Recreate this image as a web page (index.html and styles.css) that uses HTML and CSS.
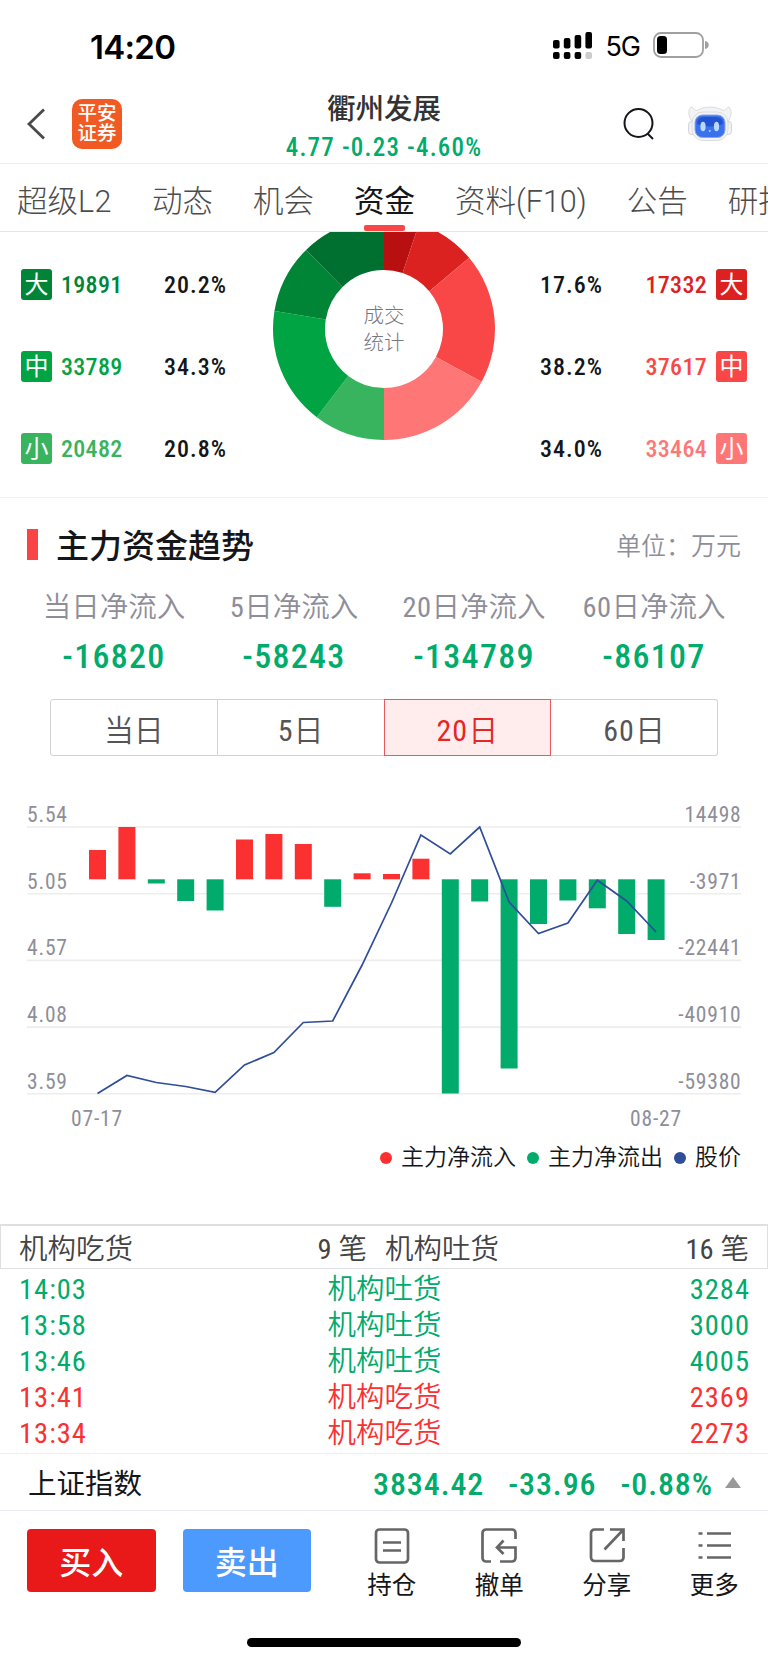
FILE: index.html
```
<!DOCTYPE html>
<html lang="zh-CN">
<head>
    <meta charset="UTF-8">
    <meta name="viewport" content="width=device-width, initial-scale=1.0">
    <title>衢州发展 - 资金</title>
    <link rel="stylesheet" href="styles.css">
</head>
<body>
    <div class="status-bar">
        <span class="clock">14:20</span>
        <div class="status-icons">
            <svg class="signal" width="40" height="28" viewBox="0 0 40 28">
                <rect x="0" y="8" width="6.6" height="8.5" rx="2"/>
                <rect x="10.8" y="6" width="6.6" height="10.5" rx="2"/>
                <rect x="21.6" y="3" width="6.6" height="13.5" rx="2"/>
                <rect x="32.4" y="0" width="6.6" height="16.5" rx="2"/>
                <rect x="0" y="20" width="6.6" height="7" rx="2"/>
                <rect x="10.8" y="20" width="6.6" height="7" rx="2"/>
                <rect x="21.6" y="20" width="6.6" height="7" rx="2"/>
                <rect x="32.4" y="20" width="6.6" height="7" rx="2" fill="#ccc"/>
            </svg>
            <span class="network">5G</span>
            <svg class="battery" width="57" height="26" viewBox="0 0 57 26">
                <rect x="1" y="1" width="49" height="24" rx="7" fill="none" stroke="#a0a0a0" stroke-width="1.8"/>
                <rect x="4" y="4" width="10" height="18" rx="3.5"/>
                <path d="M52 9c5 1 5 7 0 8z" fill="#a0a0a0"/>
            </svg>
        </div>
    </div>

    <header class="header">
        <div class="header-left">
            <svg width="18" height="32" viewBox="0 0 18 32" fill="none" stroke="#4a4a4a" stroke-width="2.8">
                <path d="M17 1.5L2 16l15 14.5"/>
            </svg>
            <div class="logo"><span>平安</span><span>证券</span></div>
        </div>
        <div class="header-title">
            <h1>衢州发展</h1>
            <p class="num">4.77 -0.23 -4.60%</p>
        </div>
        <div class="header-right">
            <svg width="32" height="34" viewBox="0 0 32 34" fill="none" stroke="#15161a" stroke-width="2">
                <circle cx="15.5" cy="16" r="14"/>
                <path d="M24.5 26.5l5.5 5.5"/>
            </svg>
            <svg width="44" height="36" viewBox="0 0 44 36">
                <path d="M4 16C0 9 0 4 3 1c3 0 3 5 7 3 7-4 17-4 24 0 4 2 4-3 7-3 3 3 3 8-1 15z" fill="#f2f3f5" stroke="#d3d5d9" stroke-width=".8"/>
                <rect x=".6" y="15.5" width="7" height="13" rx="3" fill="#f4f4f6" stroke="#c4c6cb" stroke-width=".8"/>
                <rect x="36.4" y="15.5" width="7" height="13" rx="3" fill="#f4f4f6" stroke="#c4c6cb" stroke-width=".8"/>
                <rect x="4" y="6" width="36" height="28.5" rx="11" fill="#f3f4f6" stroke="#d3d5d9" stroke-width=".8"/>
                <rect x="7" y="9" width="30" height="22.5" rx="7.5" fill="#3a72ee" stroke="#8da7e2"/>
                <path d="M9 18q0-7 7-7h12q7 0 7 7-13 5-26 0z" fill="#2453d2"/>
                <ellipse cx="15" cy="20.5" rx="2.6" ry="4.7" fill="#b9d8ff"/>
                <ellipse cx="28.5" cy="20.5" rx="2.6" ry="4.7" fill="#b9d8ff"/>
                <path d="M20.5 24.5h2.6l-1.3 1.5z" fill="#fff"/>
            </svg>
        </div>
    </header>

    <nav class="tabs">
        <a>超级<span class="l2">L2</span></a>
        <a>动态</a>
        <a>机会</a>
        <a class="active">资金</a>
        <a>资料(F10)</a>
        <a>公告</a>
        <a>研报</a>
    </nav>

    <section class="deal">
        <div class="deal-side">
            <div class="deal-row g1"><i>大</i><b class="num">19891</b><span class="num">20.2%</span></div>
            <div class="deal-row g2"><i>中</i><b class="num">33789</b><span class="num">34.3%</span></div>
            <div class="deal-row g3"><i>小</i><b class="num">20482</b><span class="num">20.8%</span></div>
        </div>
        <div class="donut">
            <svg id="donut" width="224" height="210" viewBox="-112 -97 224 210"></svg>
            <div class="donut-label">成交<br>统计</div>
        </div>
        <div class="deal-side right">
            <div class="deal-row r1"><i>大</i><b class="num">17332</b><span class="num">17.6%</span></div>
            <div class="deal-row r2"><i>中</i><b class="num">37617</b><span class="num">38.2%</span></div>
            <div class="deal-row r3"><i>小</i><b class="num">33464</b><span class="num">34.0%</span></div>
        </div>
    </section>

    <section class="trend">
        <div class="trend-head">
            <h2>主力资金趋势</h2>
            <span>单位：万元</span>
        </div>
        <div class="flow">
            <div><p>当日净流入</p><strong class="num">-16820</strong></div>
            <div><p><span class="num">5</span>日净流入</p><strong class="num">-58243</strong></div>
            <div><p><span class="num">20</span>日净流入</p><strong class="num">-134789</strong></div>
            <div><p><span class="num">60</span>日净流入</p><strong class="num">-86107</strong></div>
        </div>
        <div class="range">
            <button>当日</button>
            <button><span class="num">5</span>日</button>
            <button class="active"><span class="num">20</span>日</button>
            <button><span class="num">60</span>日</button>
        </div>
        <svg id="chart" class="chart num" width="768" height="340" viewBox="0 797 768 340"></svg>
        <div class="legend">
            <span class="in">主力净流入</span>
            <span class="out">主力净流出</span>
            <span class="price">股价</span>
        </div>
    </section>

    <section class="orders">
        <div class="orders-head">
            <div><span>机构吃货</span><span><span class="num">9</span> 笔</span></div>
            <div><span>机构吐货</span><span><span class="num">16</span> 笔</span></div>
        </div>
        <div class="order sell"><span class="num">14:03</span><span>机构吐货</span><span class="num">3284</span></div>
        <div class="order sell"><span class="num">13:58</span><span>机构吐货</span><span class="num">3000</span></div>
        <div class="order sell"><span class="num">13:46</span><span>机构吐货</span><span class="num">4005</span></div>
        <div class="order buy"><span class="num">13:41</span><span>机构吃货</span><span class="num">2369</span></div>
        <div class="order buy"><span class="num">13:34</span><span>机构吃货</span><span class="num">2273</span></div>
    </section>

    <div class="index-bar">
        <span class="index-name">上证指数</span>
        <span class="num index-val">3834.42</span>
        <span class="num index-val">-33.96</span>
        <span class="num index-val">-0.88%</span>
        <svg width="16" height="11" viewBox="0 0 16 11"><path d="M8 0l8 11H0z" fill="#999"/></svg>
    </div>

    <footer class="footer">
        <button class="btn-buy">买入</button>
        <button class="btn-sell">卖出</button>
        <div class="actions">
            <div class="action">
                <svg width="36" height="36" viewBox="0 0 36 36">
                    <rect x="2" y="1.5" width="32" height="33" rx="3.5"/>
                    <path d="M9 14.5h18M9 22.5h18"/>
                </svg>
                持仓
            </div>
            <div class="action">
                <svg width="36" height="36" viewBox="0 0 36 36">
                    <path d="M34.5 11V5a3.5 3.5 0 0 0-3.5-3.5H5A3.5 3.5 0 0 0 1.5 5v25A3.5 3.5 0 0 0 5 33.5h5"/>
                    <path d="M22.5 12.5L16 19.5l6.5 6.5M16.5 19.5H34.5V30a3.5 3.5 0 0 1-3.5 3.5H19"/>
                </svg>
                撤单
            </div>
            <div class="action">
                <svg width="36" height="36" viewBox="0 0 36 36">
                    <path d="M15 1.5H5.5A3.5 3.5 0 0 0 2 5v24.5A3.5 3.5 0 0 0 5.5 33H31a3.5 3.5 0 0 0 3.5-3.5V20M21 1.5h13.5V13M34 2L15.5 21.5"/>
                </svg>
                分享
            </div>
            <div class="action">
                <svg width="36" height="36" viewBox="0 0 36 36">
                    <path d="M11 5.5h24M11 17.5h24M11 29.5h24M2.5 5.5h4M2.5 17.5h4M2.5 29.5h4"/>
                </svg>
                更多
            </div>
        </div>
    </footer>
    <div class="home-bar"></div>
    <script src="script.js"></script>
</body>
</html>
```

FILE: styles.css
```
:root {
    --green: #00ab6b;
    --red: #fb3131;
    --gray: #8e8e99;
    --line: #eeeeef;
}
* {
    box-sizing: border-box;
}
body {
    margin: 0;
    width: 768px;
    height: 1662px;
    overflow: hidden;
    background: #fff;
    color: #15161a;
    font-family: Roboto, "Noto Sans CJK SC", sans-serif;
    line-height: 1;
}
h1, h2, p {
    margin: 0;
}
i {
    font-style: normal;
}
button {
    border: none;
    padding: 0;
    background: none;
    font-family: inherit;
}
.num {
    font-stretch: 75%;
    letter-spacing: 1px;
}

/* status bar */
.status-bar {
    height: 76px;
    padding: 32px 58px 0 90px;
    display: flex;
    justify-content: space-between;
    font-family: Inter, sans-serif;
    color: #000;
}
.clock {
    font-size: 33px;
    font-weight: 600;
    line-height: 30px;
    letter-spacing: -0.7px;
}
.status-icons {
    display: flex;
}
.network {
    font-size: 27px;
    line-height: 30px;
    margin: 0 13px 0 12px;
    letter-spacing: -1px;
}

/* header */
.header {
    height: 88px;
    padding: 0 36px 0 27px;
    display: flex;
    justify-content: space-between;
    border-bottom: 1px solid var(--line);
}
.header-left,
.header-right {
    width: 220px;
    display: flex;
    align-items: center;
    padding-top: 9px;
}
.header-left {
    gap: 27px;
}
.header-right {
    justify-content: flex-end;
    gap: 33px;
    width: 211px;
}
.logo {
    width: 50px;
    height: 50px;
    border-radius: 10px;
    background: #f15a22;
    color: #fff;
    font-size: 19.5px;
    font-weight: 500;
    display: flex;
    flex-direction: column;
    align-items: center;
    justify-content: center;
    line-height: 20px;
}
.header-title {
    text-align: center;
}
.header-title h1 {
    font-size: 28.5px;
    font-weight: 500;
    line-height: 34px;
    margin-top: 17px;
    color: #333;
}
.header-title p {
    font-size: 25px;
    font-weight: 500;
    line-height: 30px;
    margin-top: 6px;
    color: var(--green);
    letter-spacing: 1.2px;
}

/* tabs */
.tabs {
    height: 68px;
    padding-left: 17px;
    display: flex;
    gap: 40px;
    white-space: nowrap;
    overflow: hidden;
    border-bottom: 1px solid #e6e6e8;
    font-size: 30.5px;
    font-weight: 300;
    line-height: 75px;
    color: #4c4c4c;
}
.l2 {
    letter-spacing: 0.5px;
}
.tabs .active {
    color: #15161a;
    font-weight: 400;
    position: relative;
}
.tabs .active::after {
    content: "";
    position: absolute;
    left: 10px;
    top: 61px;
    width: 41px;
    height: 6px;
    border-radius: 2px;
    background: #f94545;
}

/* deal statistics */
.deal {
    height: 266px;
    padding: 0 21px;
    display: flex;
    justify-content: space-between;
    border-bottom: 1px solid var(--line);
}
.deal-side {
    width: 220px;
    padding-top: 37px;
    display: flex;
    flex-direction: column;
    gap: 50.5px;
}
.deal-row {
    display: flex;
    align-items: center;
    height: 31.5px;
    line-height: 34px;
    font-size: 24px;
    font-weight: 500;
}
.deal-row i {
    width: 31px;
    height: 31px;
    border-radius: 3px;
    line-height: 33px;
    color: #fff;
    font-size: 24px;
    font-weight: 400;
    text-align: center;
}
.deal-row .num {
    padding-top: 1px;
}
.deal-row b.num {
    width: 112px;
    padding-left: 9px;
    font-weight: 500;
    letter-spacing: 0.3px;
}
.right .deal-row {
    flex-direction: row-reverse;
}
.right .deal-row b.num {
    width: 113px;
    padding: 1px 9px 0 0;
    text-align: right;
}
.g1 b { color: #008537; }
.g1 i { background: #008537; }
.g2 b { color: #00a443; }
.g2 i { background: #00a443; }
.g3 b { color: #38b35e; }
.g3 i { background: #38b35e; }
.r1 b { color: #dc2121; }
.r1 i { background: #dc2121; }
.r2 b { color: #f94747; }
.r2 i { background: #f94747; }
.r3 b { color: #ff7676; }
.r3 i { background: #ff7676; }
.donut {
    position: relative;
    width: 224px;
}
.donut svg {
    display: block;
}
.donut-label {
    position: absolute;
    left: 0;
    right: 0;
    top: 71px;
    text-align: center;
    font-size: 20.5px;
    font-weight: 300;
    line-height: 26.5px;
    color: #777783;
}

/* trend */
.trend {
    height: 726px;
    padding-top: 31px;
}
.trend-head {
    display: flex;
    align-items: center;
    justify-content: space-between;
    height: 31px;
    margin: 0 27px;
    border-left: 11px solid #f94545;
    padding-left: 18px;
}
.trend-head h2 {
    font-size: 33px;
    font-weight: 500;
    line-height: 34px;
    padding-top: 4px;
}
.trend-head span {
    font-size: 25px;
    font-weight: 350;
    padding-top: 3px;
    color: var(--gray);
}
.flow {
    display: grid;
    grid-template-columns: repeat(4, 1fr);
    margin: 30px 24px 0;
    text-align: center;
}
.flow p {
    font-size: 28.5px;
    font-weight: 350;
    line-height: 36px;
    color: var(--gray);
}
.flow p .num {
    letter-spacing: 0.5px;
    font-weight: 400;
}
.flow strong {
    display: block;
    font-size: 34px;
    font-weight: 500;
    line-height: 36px;
    margin: 12px 0 0;
    color: var(--green);
    letter-spacing: 1.3px;
}
.range {
    display: flex;
    height: 57px;
    margin: 25px 50px 0;
}
.range button {
    flex: 1;
    border: 1px solid #d2d2d4;
    border-left-width: 0;
    font-size: 30px;
    font-weight: 350;
    color: #555;
}
.range button .num {
    font-weight: 400;
}
.range button:first-child {
    border-left-width: 1px;
    border-radius: 3px 0 0 3px;
}
.range button:last-child {
    border-radius: 0 3px 3px 0;
}
.range .active {
    border: 1px solid #e85a5e;
    margin-left: -1px;
    background: #ffeded;
    color: #e62525;
}
.chart {
    display: block;
    margin-top: 41px;
    font-size: 21.5px;
    fill: var(--gray);
    letter-spacing: 0.8px;
}
.legend {
    display: flex;
    justify-content: flex-end;
    gap: 11px;
    padding-right: 27px;
    margin-top: 8px;
    font-size: 23px;
    font-weight: 350;
    line-height: 26px;
}
.legend span {
    display: flex;
    align-items: center;
    gap: 9px;
}
.legend span::before {
    content: "";
    width: 12px;
    height: 12px;
    border-radius: 50%;
    background: var(--red);
}
.legend .out::before { background: var(--green); }
.legend .price::before { background: #2f4d99; }

/* institution orders */
.orders {
    height: 229px;
    font-size: 28.5px;
    font-weight: 350;
}
.orders .num {
    font-weight: 400;
}
.orders-head {
    display: flex;
    height: 45px;
    padding: 0 18px;
    gap: 18px;
    border: 1px solid #dfdfe0;
    border-top-width: 2px;
    line-height: 48px;
    color: #444;
    margin-bottom: 1px;
}
.orders-head > div:first-child {
    width: 348px;
}
.orders-head > div:last-child {
    flex: 1;
}
.orders-head div {
    display: flex;
    justify-content: space-between;
}
.orders-head .num {
    letter-spacing: 0;
}
.order {
    display: grid;
    grid-template-columns: 1fr auto 1fr;
    height: 36px;
    line-height: 39px;
    padding: 0 18px 0 19px;
}
.order span:last-child {
    text-align: right;
}
.sell { color: var(--green); }
.buy { color: var(--red); }

/* index quote */
.index-bar {
    height: 58px;
    padding: 0 27px 0 28px;
    display: flex;
    align-items: center;
    border-top: 1px solid var(--line);
    border-bottom: 1px solid #ececf2;
    font-size: 28.5px;
}
.index-name {
    margin: 6px auto 0 0;
}
.index-val {
    margin: 4px 0 0 24px;
    font-size: 32px;
    font-weight: 500;
    color: var(--green);
    letter-spacing: 0.9px;
}
.index-bar svg {
    margin-left: 12px;
}

/* footer */
.footer {
    display: flex;
    padding: 18px 0 0 27px;
    height: 127px;
}
.footer button {
    width: 129px;
    height: 62.5px;
    border-radius: 4px;
    margin-right: 27px;
    color: #fff;
    font-size: 32px;
    font-weight: 500;
}
.btn-buy { background: #ea1919; }
.btn-sell { background: #4d9aff; }
.actions {
    flex: 1;
    display: flex;
}
.action {
    width: 107.5px;
    display: flex;
    flex-direction: column;
    align-items: center;
    font-size: 24.5px;
    gap: 8px;
    line-height: 28px;
    margin-top: -1px;
}
.action svg {
    fill: none;
    stroke: #666;
    stroke-width: 2.7;
}
.home-bar {
    width: 274px;
    height: 9px;
    margin: 0 auto;
    border-radius: 5px;
    background: #000;
}
```

FILE: script.js
```
// donut: [end angle, color], clockwise from the top
const slices = [
    [18.4, '#b81010'], [50.1, '#dc2121'], [118.4, '#f94747'], [180, '#ff7676'],
    [217.3, '#38b35e'], [279.3, '#00a443'], [315.4, '#008537'], [360, '#007030']
];
const point = (r, deg) => {
    const a = deg * Math.PI / 180;
    return (r * Math.sin(a)).toFixed(2) + ' ' + (-r * Math.cos(a)).toFixed(2);
};
let from = 0;
document.getElementById('donut').innerHTML = slices.map(([to, color]) => {
    const d = `M${point(111, from)}A111 111 0 0 1 ${point(111, to)}L${point(59, to)}A59 59 0 0 0 ${point(59, from)}Z`;
    from = to;
    return `<path d="${d}" fill="${color}"/>`;
}).join('');

// trend chart
const base = 879.3;
const step = 29.4;
const bars = [850, 827, 883.5, 901, 910.5, 839.5, 834, 844, 906.8, 873.3, 874, 858.7,
    1093.5, 901.5, 1068.5, 924, 900.5, 908.3, 934, 940];
const prices = [1093.5, 1075.5, 1082.5, 1086.5, 1092.3, 1065, 1052.5, 1022.5, 1021, 965,
    903, 835, 854, 827, 902, 933.5, 923, 880.3, 901, 932];
const left = ['5.54', '5.05', '4.57', '4.08', '3.59'];
const right = ['14498', '-3971', '-22441', '-40910', '-59380'];
let out = '';
left.forEach((label, i) => {
    const y = 827 + i * 66.7;
    out += `<path d="M27 ${y}H741" stroke="#ededee" stroke-width="1.6"/>`;
    out += `<text x="27" y="${y - 5.2}">${label}</text>`;
    out += `<text x="741.5" y="${y - 5.2}" text-anchor="end">${right[i]}</text>`;
});
bars.forEach((v, i) => {
    const color = v < base ? '#fb3131' : '#00ab6b';
    out += `<rect x="${89 + i * step}" y="${Math.min(v, base)}" width="17" height="${Math.abs(v - base)}" fill="${color}"/>`;
});
out += `<polyline points="${prices.map((v, i) => (97.5 + i * step) + ',' + v).join(' ')}" fill="none" stroke="#2f4d99" stroke-width="1.7"/>`;
out += '<text x="97" y="1126" text-anchor="middle">07-17</text><text x="656" y="1126" text-anchor="middle">08-27</text>';
document.getElementById('chart').innerHTML = out;
```
